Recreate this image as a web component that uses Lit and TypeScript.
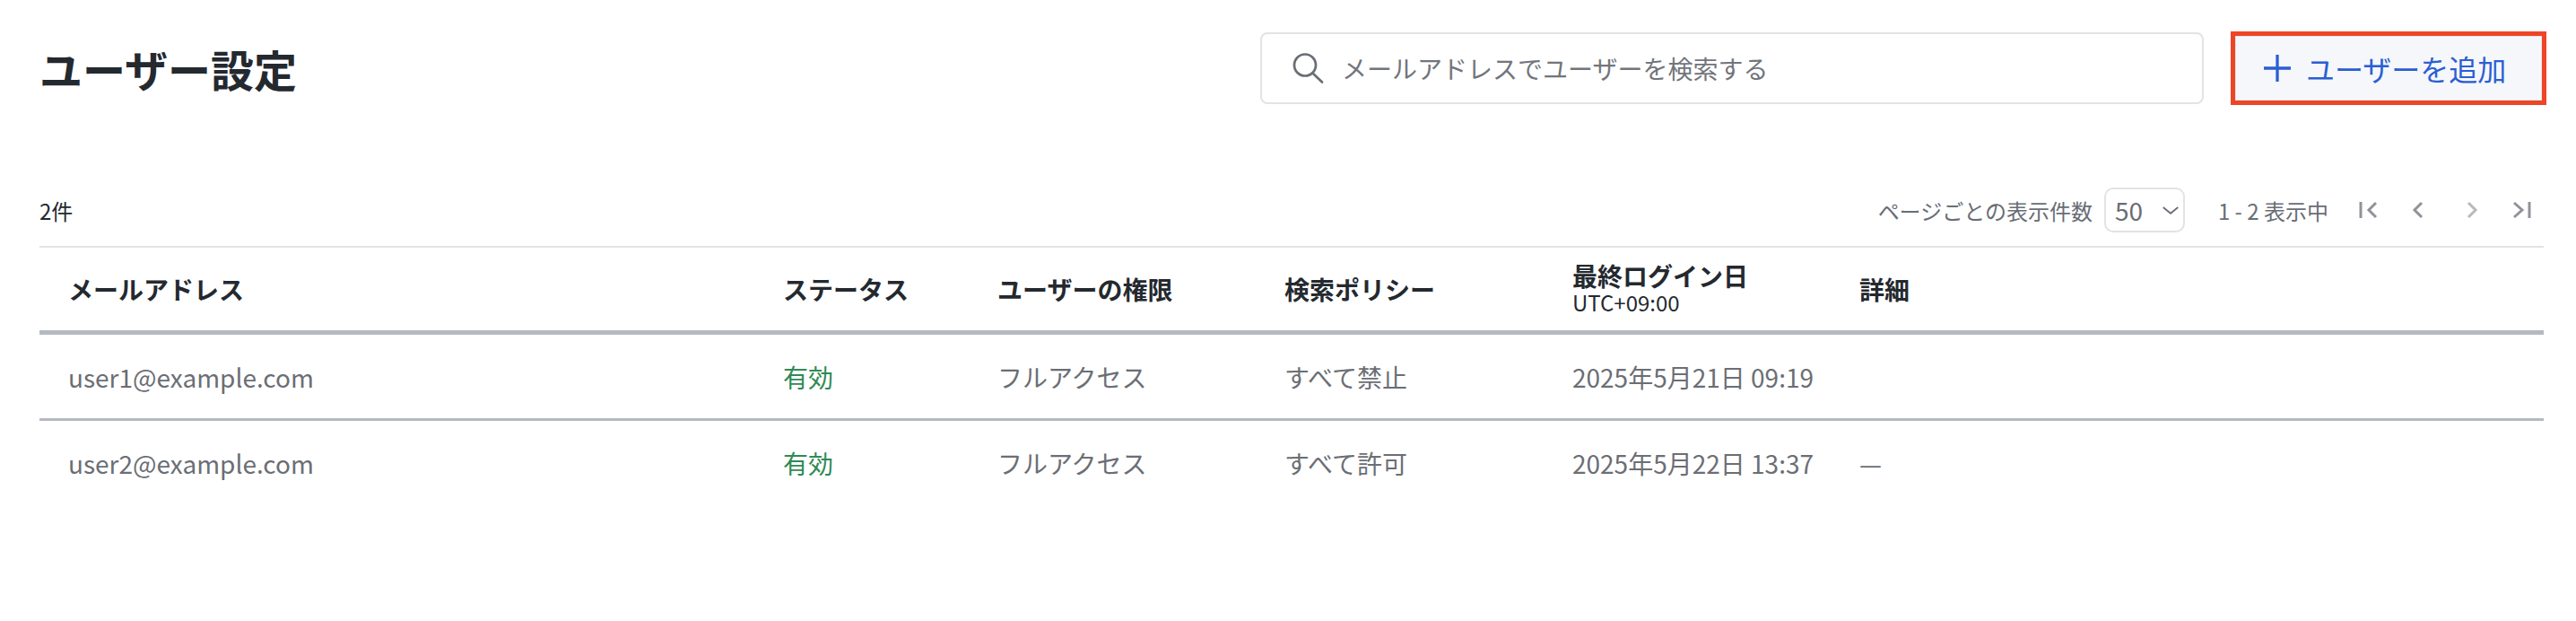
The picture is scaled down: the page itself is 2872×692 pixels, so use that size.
import { LitElement, html, css, svg } from "lit";
import { customElement } from "lit/decorators.js";

const ICON = {
  first: svg`<path d="M2 3v18M19 4l-8 8 8 8"/>`,
  prev: svg`<path d="M14 4l-8 8 8 8"/>`,
  next: svg`<path d="M9 4l8 8-8 8"/>`,
  last: svg`<path d="M21 3v18M4 4l9 8-9 8"/>`,
};

const ROWS = [
  { email: "user1@example.com", status: "有効", role: "フルアクセス", policy: "すべて禁止", login: "2025年5月21日 09:19", detail: "" },
  { email: "user2@example.com", status: "有効", role: "フルアクセス", policy: "すべて許可", login: "2025年5月22日 13:37", detail: "—" },
];

@customElement("app-root")
export class AppRoot extends LitElement {
  static styles = css`
    :host {
      display: block;
      width: 2872px;
      height: 692px;
      background: #fff;
      font-family: "Noto Sans CJK JP", "Noto Sans", sans-serif;
      color: #24292f;
      box-sizing: border-box;
      padding: 35px 33px 0 44px;
      overflow: hidden;
    }
    .head {
      display: flex;
      align-items: center;
      height: 82px;
    }
    h1 {
      margin: 0;
      flex: 1;
      font-size: 48px;
      font-weight: 700;
      line-height: 1;
    }
    .search {
      width: 1052px;
      height: 80px;
      box-sizing: border-box;
      border: 2px solid #e2e3e5;
      border-radius: 8px;
      display: flex;
      align-items: center;
      gap: 20px;
      padding-left: 33px;
      font-size: 28px;
      color: #72757b;
      margin-right: 30px;
    }
    .search svg {
      width: 36px;
      height: 36px;
      fill: none;
      stroke: #696d75;
      stroke-width: 2.7;
      stroke-linecap: round;
    }
    .add {
      width: 352px;
      height: 82px;
      box-sizing: border-box;
      border: 5px solid #ee4527;
      background: #f6f7fa;
      box-shadow: inset 0 0 0 1px #e6e8ed;
      color: #2a5fd3;
      font-size: 32px;
      display: flex;
      align-items: center;
      gap: 17px;
      padding-left: 32px;
    }
    .add svg {
      width: 30px;
      height: 30px;
      fill: none;
      stroke: #2a5fd3;
      stroke-width: 3.3;
    }
    .tools {
      margin-top: 77px;
      height: 80px;
      display: flex;
      align-items: center;
      margin-right: 16px;
      font-size: 24px;
    }
    .count {
      flex: 1;
      color: #24292f;
    }
    .per {
      color: #696d75;
    }
    .select {
      width: 90px;
      height: 50px;
      box-sizing: border-box;
      border: 2px solid #e2e3e5;
      border-radius: 10px;
      margin-left: 13px;
      display: flex;
      align-items: center;
      justify-content: space-between;
      padding: 0 5px 0 10px;
      font-size: 28px;
      color: #696d75;
    }
    .select svg {
      width: 18px;
      height: 18px;
      fill: none;
      stroke: #696d75;
      stroke-width: 2.4;
    }
    .range {
      margin-left: 37px;
      color: #696d75;
    }
    .pager {
      display: flex;
      align-items: center;
      gap: 32.33px;
      margin-left: 34px;
    }
    .pager svg {
      width: 24px;
      height: 24px;
      fill: none;
      stroke: #8f9399;
      stroke-width: 3;
      display: block;
    }
    .pager svg.off {
      stroke: #b6b9bd;
    }
    .table {
      margin-right: 3px;
      border-top: 2px solid #e2e3e5;
    }
    .row {
      display: grid;
      grid-template-columns: 797px 239px 320px 321px 320px 1fr;
      align-items: center;
      height: 94px;
      border-bottom: 3px solid #b4b9c4;
      box-sizing: border-box;
      font-size: 28px;
      color: #6b6e74;
    }
    .row.body {
      height: 96px;
    }
    .row.body:last-child {
      height: 94px;
      border-bottom: 0;
    }
    .row > div {
      padding-left: 32px;
      white-space: nowrap;
    }
    .row.th {
      height: 97px;
      border-bottom-width: 5px;
      font-weight: 700;
      color: #24292f;
    }
    .stack {
      line-height: 32px;
      padding-bottom: 2px;
    }
    .stack small {
      display: block;
      font-size: 24px;
      font-weight: 400;
      line-height: 28px;
    }
    .ok {
      color: #2f8a55;
    }
  `;

  render() {
    return html`
      <div class="head">
        <h1>ユーザー設定</h1>
        <div class="search">
          <svg viewBox="0 0 36 36"><circle cx="15" cy="14.5" r="12"/><path d="M23.5 23.5L34 33.5"/></svg>
          <span>メールアドレスでユーザーを検索する</span>
        </div>
        <div class="add">
          <svg viewBox="0 0 30 30"><path d="M15 0v30M0 15h30"/></svg>
          <span>ユーザーを追加</span>
        </div>
      </div>
      <div class="tools">
        <div class="count">2件</div>
        <span class="per">ページごとの表示件数</span>
        <div class="select">
          <span>50</span>
          <svg viewBox="0 0 24 24"><path d="M1 8l11 9 11-9"/></svg>
        </div>
        <span class="range">1 - 2 表示中</span>
        <div class="pager">
          <svg viewBox="0 0 24 24">${ICON.first}</svg>
          <svg viewBox="0 0 24 24">${ICON.prev}</svg>
          <svg viewBox="0 0 24 24" class="off">${ICON.next}</svg>
          <svg viewBox="0 0 24 24">${ICON.last}</svg>
        </div>
      </div>
      <div class="table">
        <div class="row th">
          <div>メールアドレス</div>
          <div>ステータス</div>
          <div>ユーザーの権限</div>
          <div>検索ポリシー</div>
          <div class="stack">最終ログイン日<small>UTC+09:00</small></div>
          <div>詳細</div>
        </div>
        ${ROWS.map(
          (r) => html`
            <div class="row body">
              <div>${r.email}</div>
              <div class="ok">${r.status}</div>
              <div>${r.role}</div>
              <div>${r.policy}</div>
              <div>${r.login}</div>
              <div>${r.detail}</div>
            </div>
          `
        )}
      </div>
    `;
  }
}
